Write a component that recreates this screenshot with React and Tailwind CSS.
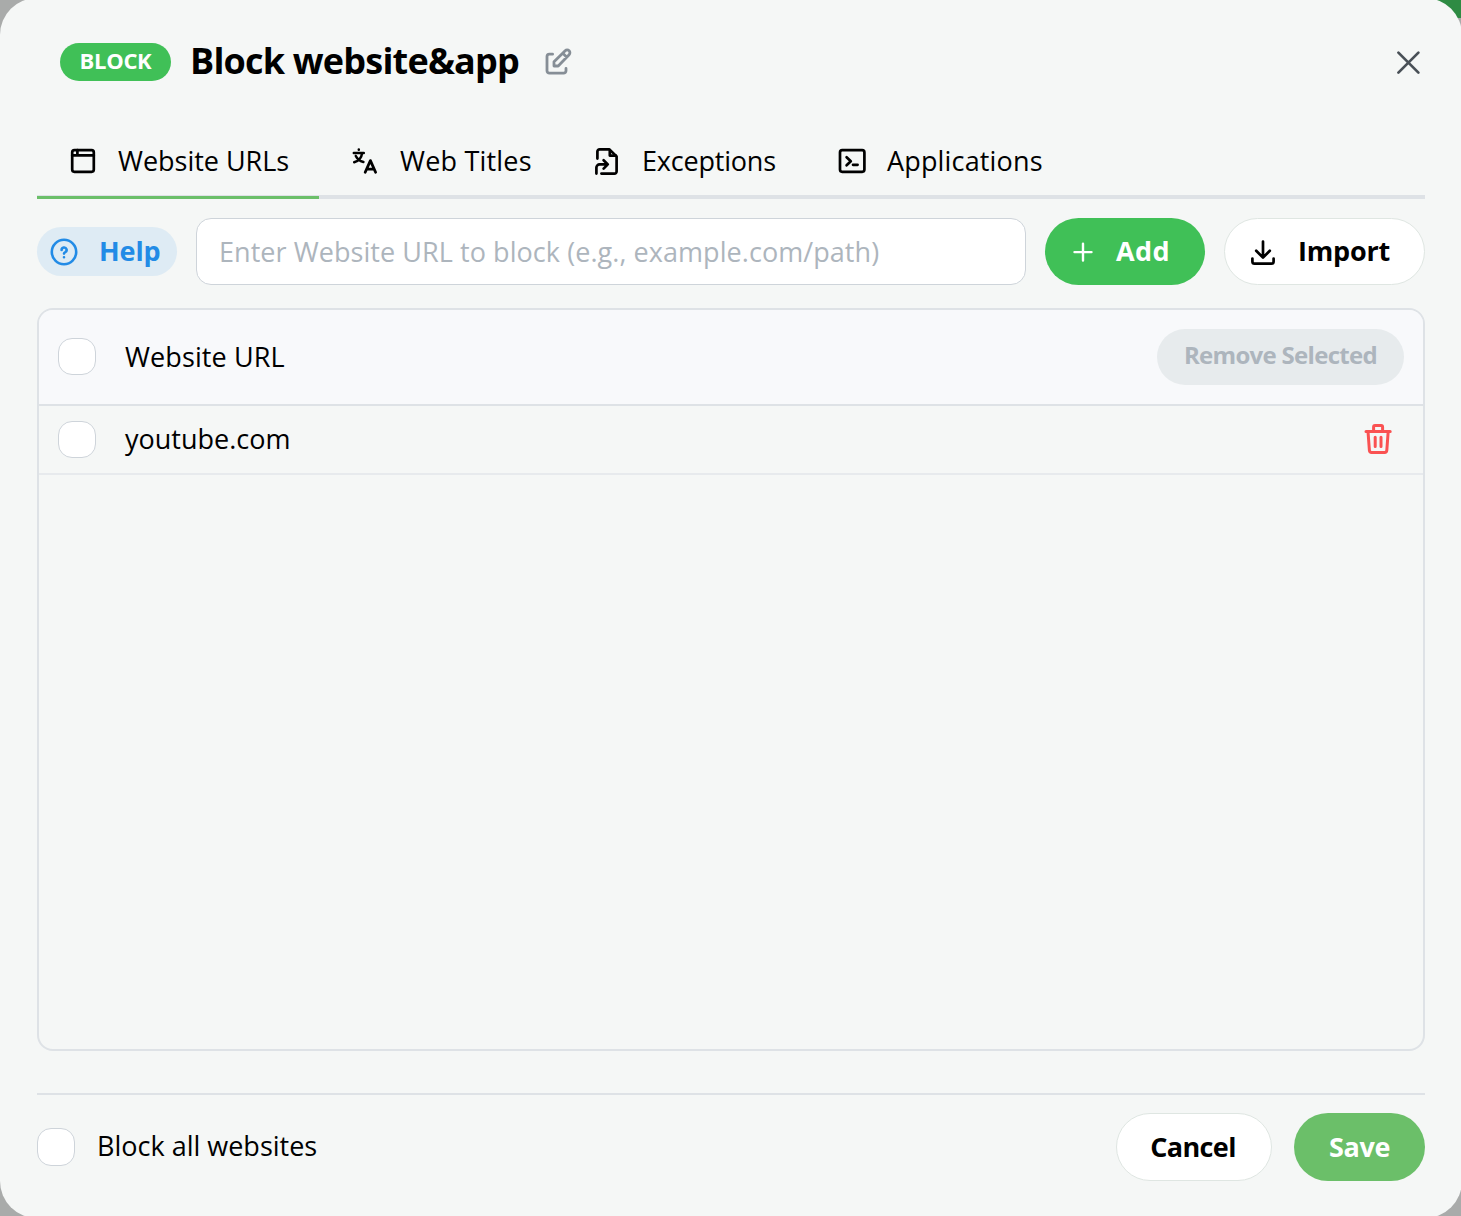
import React, { useState } from 'react';

const Icon = ({ size = 32, width = 2, className = '', children }) => (
  <svg
    width={size}
    height={size}
    viewBox="0 0 32 32"
    fill="none"
    stroke="currentColor"
    strokeWidth={width}
    strokeLinecap="round"
    strokeLinejoin="round"
    className={`shrink-0 ${className}`}
  >
    {children}
  </svg>
);

const WindowIcon = () => (
  <Icon width={2.7}>
    <rect x="5.2" y="5.2" width="21.6" height="21.6" rx="2.2" />
    <path d="M5.2 10.4h21.6M10.4 5.2v5" />
  </Icon>
);

const TranslateIcon = () => (
  <Icon width={2.8}>
    <path d="M4.8 8h10M9.8 4.6v.2M6.8 11c1.4 3 4 5 7.6 6M13 8.6c-.6 4.6-3.4 7.4-7.8 8.6" strokeWidth={2.5} />
    <path d="M16.2 27.2l5.2-11.6 5.2 11.6M18.2 24.2h6.2" />
  </Icon>
);

const ExceptionIcon = () => (
  <Icon width={2.7}>
    <path d="M6.4 13.6V6.6a2.2 2.2 0 0 1 2.2-2.2h9.8l7.2 7v15a2.2 2.2 0 0 1-2.2 2.2H10.4" />
    <path d="M18.8 5v5.6h6" />
    <path d="M5.4 28.6v-6a3.2 3.2 0 0 1 3.2-3.2h8M12.6 15.2l4.2 4.2-4.2 4.2" />
  </Icon>
);

const TerminalIcon = () => (
  <Icon width={2.7}>
    <rect x="4" y="5.2" width="24.4" height="21.6" rx="2.2" />
    <path d="M10.6 12.2l4.2 4-4.2 4M17 19.8h4.6" />
  </Icon>
);

const TrashIcon = () => (
  <Icon width={3} className="text-[#fa5252]">
    <path d="M4 8.4h24.2M11.6 8.4V4a1.4 1.4 0 0 1 1.4-1.4h6.2A1.4 1.4 0 0 1 20.6 4v4.4" />
    <path d="M6 8.4l1.4 19a2.2 2.2 0 0 0 2.2 2h13a2.2 2.2 0 0 0 2.2-2l1.4-19" />
    <path d="M13.2 14.2v9.4M19 14.2v9.4" />
  </Icon>
);

const TABS = [
  { label: 'Website URLs', icon: <WindowIcon />, cell: 'w-[282px] pl-[30px]', text: 'ml-[19px] tracking-[-0.02px]' },
  { label: 'Web Titles', icon: <TranslateIcon />, cell: 'w-[243px] pl-[30px]', text: 'ml-[19px] tracking-[0.2px]' },
  { label: 'Exceptions', icon: <ExceptionIcon />, cell: 'w-[244px] pl-[29px]', text: 'ml-[19px] tracking-[-0.2px]' },
  { label: 'Applications', icon: <TerminalIcon />, cell: 'w-[268px] pl-[30px]', text: 'ml-[19px] tracking-[0.16px]' },
];

const Checkbox = ({ className = 'h-[37px]' }) => (
  <span className={`block w-[38px] shrink-0 rounded-[14px] border border-[#ced4da] bg-white ${className}`} />
);

export default function App() {
  const [active, setActive] = useState('Website URLs');

  return (
    <div className="relative h-[1216px] w-[1461px] overflow-hidden bg-[#a9abaa] font-['Open_Sans','Noto_Sans',sans-serif] text-[27px] leading-[36px] text-black">
      {/* Dimmed page behind the dialog */}
      <div className="absolute top-0 right-0 h-[18px] w-[60px] bg-[#2e8b43]" />

      <div className="relative -mt-[2px] flex h-[1220px] w-[1462px] flex-col rounded-[37px] bg-[#f5f7f6] pr-[37px] pl-[37px]">
        {/* Title bar */}
        <div className="flex h-[128px] items-center pl-[23px]">
          <span className="flex h-[38px] w-[111px] items-center justify-center rounded-full bg-[#40c057] pb-[4px] text-[22px] font-bold tracking-[-0.3px] text-white">
            BLOCK
          </span>
          <h1 className="ml-[19px] pb-[2px] text-[36px] leading-[48px] font-bold tracking-[-0.8px] whitespace-nowrap">Block website&amp;app</h1>
          <button className="ml-[23px] text-[#868e96]">
            <Icon width={2.8}>
              <path d="M10.6 8.2H7.4a2.4 2.4 0 0 0-2.4 2.4v14.2a2.4 2.4 0 0 0 2.4 2.4h14.2a2.4 2.4 0 0 0 2.4-2.4V22.4" />
              <path d="M12 20v-4.2L23.2 4.8a2.7 2.7 0 0 1 3.9 3.9L16.2 20zM20.8 7.2l3.8 3.8" />
            </Icon>
          </button>
          <button className="mr-px ml-auto text-[#495057]">
            <Icon width={2.7}>
              <path d="M6.4 6.6l20 20M26.4 6.6l-20 20" />
            </Icon>
          </button>
        </div>

        {/* Tabs */}
        <div className="flex h-[73px] border-b-4 border-[#dee2e6]">
          {TABS.map((tab) => (
            <button
              key={tab.label}
              onClick={() => setActive(tab.label)}
              className={`-mb-1 flex h-[73px] items-center self-end whitespace-nowrap ${tab.cell} ${
                active === tab.label ? 'border-b-3 border-[#6bbf69]' : 'border-b-3 border-transparent'
              }`}
            >
              {tab.icon}
              <span className={tab.text}>{tab.label}</span>
            </button>
          ))}
        </div>

        {/* URL entry */}
        <div className="mt-[19px] flex h-[67px] items-center">
          <button className="flex h-[49px] w-[140px] items-center rounded-full bg-[#deebf4] pl-[11px] font-bold text-[#228be6]">
            <Icon width={2.6}>
              <circle cx="16" cy="16" r="12.2" />
              <path d="M13.6 14a2.5 2.5 0 1 1 3.7 2.2c-.8.4-1.3.8-1.3 1.4M16 21.2v.1" />
            </Icon>
            <span className="ml-[19px] pb-px tracking-[-0.1px]">Help</span>
          </button>
          <input
            placeholder="Enter Website URL to block (e.g., example.com/path)"
            className="ml-[19px] h-[67px] w-[830px] rounded-[15px] border border-[#ced4da] bg-white px-[22px] tracking-[0.06px] outline-none placeholder:text-[#adb5bd]"
          />
          <button className="ml-[19px] flex h-[67px] w-[160px] items-center rounded-full bg-[#40c057] pl-[22px] font-bold text-white">
            <Icon width={2.4}>
              <path d="M16 7.6v17M7.5 16.1h17" />
            </Icon>
            <span className="ml-[17px] pb-px tracking-[0.4px]">Add</span>
          </button>
          <button className="ml-[19px] flex h-[67px] w-[201px] items-center rounded-full border border-[#dfe6e2] bg-white pl-[22px] font-bold">
            <Icon width={2.7}>
              <path d="M16 5.6v16M9.2 14.8l6.8 6.8 6.8-6.8M5.4 22.6v2.8a2.2 2.2 0 0 0 2.2 2.2h16.8a2.2 2.2 0 0 0 2.2-2.2v-2.8" />
            </Icon>
            <span className="ml-[19px] pb-px tracking-[-0.2px]">Import</span>
          </button>
        </div>

        {/* Blocked list */}
        <div className="mt-[23px] h-[743px] w-[1388px] overflow-hidden rounded-[16px] border-2 border-[#dee2e6]">
          <div className="flex h-[96px] items-center border-b-2 border-[#dee2e6] bg-[#f8f9fb] px-[19px]">
            <Checkbox className="mb-px h-[37px]" />
            <span className="ml-[29px] tracking-[0.1px]">Website URL</span>
            <button className="ml-auto flex h-[56px] w-[247px] items-center justify-center rounded-full bg-[#e7ebed] pb-[4px] text-[24px] font-bold tracking-[-0.7px] whitespace-nowrap text-[#adb5bd]">
              Remove Selected
            </button>
          </div>
          <div className="flex h-[69px] items-center border-b-2 border-[#e7eaed] px-[19px]">
            <Checkbox />
            <span className="ml-[29px] pb-px">youtube.com</span>
            <button className="mr-[10px] mb-[2px] ml-auto">
              <TrashIcon />
            </button>
          </div>
        </div>

        {/* Footer */}
        <div className="mt-[42px] flex w-[1388px] items-center border-t-2 border-[#dee2e6] pt-[18px]">
          <Checkbox className="h-[38px]" />
          <span className="ml-[22px] pb-[2px]">Block all websites</span>
          <button className="ml-auto h-[68px] w-[156px] rounded-full border border-[#dfe6e2] bg-white pr-[2px] font-bold tracking-[-0.6px]">Cancel</button>
          <button className="ml-[22px] h-[68px] w-[131px] rounded-full bg-[#6bbf69] font-bold tracking-[-0.4px] text-white">Save</button>
        </div>
      </div>
    </div>
  );
}
